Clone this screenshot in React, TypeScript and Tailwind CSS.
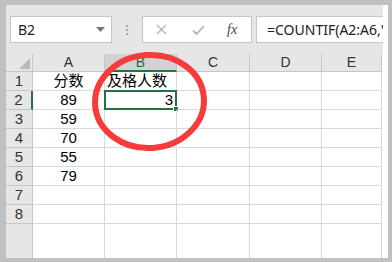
import React from "react";

const cols = ["A", "B", "C", "D", "E"];
const widths = ["w-[72px]", "w-[72px]", "w-[73px]", "w-[72px]", "w-[60px]"];

const data: Record<number, string[]> = {
  1: ["分数", "及格人数", "", "", ""],
  2: ["89", "3", "", "", ""],
  3: ["59", "", "", "", ""],
  4: ["70", "", "", "", ""],
  5: ["55", "", "", "", ""],
  6: ["79", "", "", "", ""],
  7: ["", "", "", "", ""],
  8: ["", "", "", "", ""],
};

const cellFont = { fontFamily: '"Liberation Sans", "Noto Sans CJK SC", sans-serif' };

export default function App() {
  return (
    <div className="w-[392px] h-[262px] bg-[#c0c0c0] pt-[5px] pl-[6px] pr-[4px] pb-[4px]">
      <div className="relative w-[382px] h-[253px] bg-white flex flex-col overflow-hidden">
        {/* toolbar */}
        <div className="w-[377px] h-[49px] shrink-0 bg-[#e6e6e6] flex items-start pt-[11px] pl-[4px]">
          <div className="w-[102px] h-[27px] bg-white border border-[#c6c6c6] flex items-center pl-[7px] pr-[6px]">
            <span className="text-[14px] text-[#222] flex-1" style={{ fontFamily: '"Noto Sans", sans-serif' }}>B2</span>
            <svg width="9" height="5" viewBox="0 0 9 5"><path d="M0 0 L9 0 L4.5 5 Z" fill="#777" /></svg>
          </div>
          <div className="w-[30px] h-[27px] flex flex-col items-center justify-center gap-[2px]">
            <div className="w-[2px] h-[2px] bg-[#a8a8a8]" />
            <div className="w-[2px] h-[2px] bg-[#a8a8a8]" />
            <div className="w-[2px] h-[2px] bg-[#a8a8a8]" />
          </div>
          <div className="w-[110px] h-[27px] bg-white border border-[#c6c6c6] flex items-center">
            <svg className="ml-[13px]" width="11" height="11" viewBox="0 0 11 11">
              <path d="M1 1 L10 10 M10 1 L1 10" stroke="#b4b4b4" strokeWidth="1.4" />
            </svg>
            <svg className="ml-[25px]" width="13" height="10" viewBox="0 0 13 10">
              <path d="M1 5.5 L4.5 9 L12 1" stroke="#b4b4b4" strokeWidth="1.8" fill="none" />
            </svg>
            <span className="ml-[22px] text-[14px] italic text-[#444]" style={{ fontFamily: '"Liberation Serif", serif' }}>fx</span>
          </div>
          <div className="ml-[4px] w-[127px] h-[27px] bg-white border-y border-l border-[#c6c6c6] flex items-center pl-[10px] overflow-hidden whitespace-nowrap">
            <span className="text-[14px] text-[#222]" style={{ fontFamily: '"Noto Sans", sans-serif' }}>=COUNTIF(A2:A6,"&gt;=60")</span>
          </div>
        </div>

        {/* header row */}
        <div className="flex h-[18px] shrink-0" style={cellFont}>
          <div className="w-[27px] h-[18px] bg-[#e6e6e6] border-r border-b border-[#c6c6c6] flex items-end justify-end pr-[2px] pb-[2px]">
            <svg width="11" height="11" viewBox="0 0 11 11"><path d="M11 0 L11 11 L0 11 Z" fill="#b9b9b9" /></svg>
          </div>
          {cols.map((c, i) => (
            <div
              key={c}
              className={`${widths[i]} h-[18px] flex items-center justify-center text-[14px] border-r border-[#c6c6c6] ${
                c === "B" ? "bg-[#d2d2d2] text-[#1e6b40] border-b-2 border-b-[#217346]" : "bg-[#e6e6e6] text-[#333] border-b border-b-[#c6c6c6]"
              }`}
            >
              {c}
            </div>
          ))}
        </div>

        {/* rows */}
        {[1, 2, 3, 4, 5, 6, 7, 8].map((r) => (
          <div key={r} className="flex h-[19px] shrink-0" style={cellFont}>
            <div
              className={`w-[27px] h-[19px] bg-[#e6e6e6] border-b border-[#c6c6c6] flex items-center justify-center text-[15px] text-[#333] ${
                r === 2 ? "border-r-2 border-r-[#217346]" : "border-r border-r-[#c6c6c6]"
              }`}
            >
              {r}
            </div>
            {cols.map((c, i) => {
              const v = data[r][i];
              const isSel = r === 2 && c === "B";
              return (
                <div
                  key={c}
                  className={`${widths[i]} h-[19px] relative border-r border-b border-[#d9d9d9] flex items-center text-[15px] text-black whitespace-nowrap ${
                    c === "A" ? "justify-center" : isSel ? "justify-end pr-[3px]" : "justify-start pl-[2px]"
                  }`}
                >
                  {v}
                  {isSel && (
                    <div className="absolute left-[-1px] top-[-1px] right-[-1px] bottom-[-1px] border-2 border-[#217346]">
                      <div className="absolute right-[-4px] bottom-[-4px] w-[6px] h-[6px] bg-[#217346] border border-white" />
                    </div>
                  )}
                </div>
              );
            })}
          </div>
        ))}

        {/* filler */}
        <div className="flex flex-1">
          <div className="w-[27px] bg-[#e6e6e6] border-r border-[#c6c6c6]" />
          {cols.map((c, i) => (
            <div key={c} className={`${widths[i]} border-r border-[#d9d9d9]`} />
          ))}
        </div>

        {/* red annotation ellipse */}
        <svg className="absolute left-0 top-0 pointer-events-none" width="382" height="253" viewBox="0 0 382 253">
          <ellipse cx="143.5" cy="96.5" rx="54.5" ry="46.5" fill="none" stroke="#f53b3b" strokeWidth="6" transform="rotate(-4 143.5 96.5)" />
        </svg>
      </div>
    </div>
  );
}
